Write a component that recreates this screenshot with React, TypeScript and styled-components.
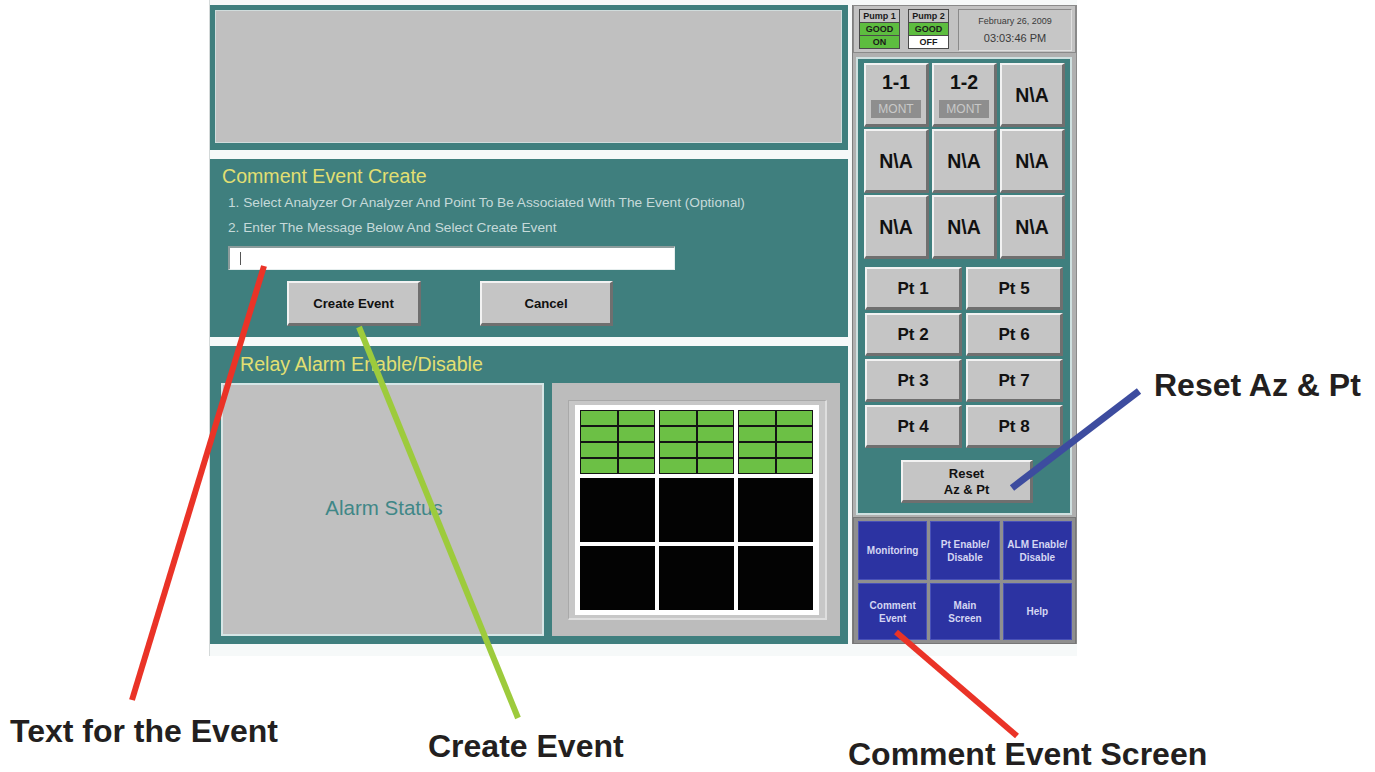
import React from "react";
import styled, { createGlobalStyle } from "styled-components";

const Global = createGlobalStyle`
  html, body { margin: 0; padding: 0; background: #ffffff; }
  body { font-family: "Liberation Sans", Arial, sans-serif; }
  * { box-sizing: border-box; }
`;

const TEAL = "#3f7f7e";
const GRAY = "#c0c0c0";
const YELLOW = "#e2df72";

const Page = styled.div`
  position: relative;
  width: 1375px;
  height: 772px;
  overflow: hidden;
  background: #fff;
`;

const Screen = styled.div`
  margin-left: 209px;
  width: 868px;
  height: 656px;
  border-left: 1px solid #d4d9d9;
  background: #f6f9f9;
  padding-top: 5px;
  display: flex;
  gap: 4px;
  align-items: flex-start;
`;

const LeftCol = styled.div`
  width: 638px;
  display: flex;
  flex-direction: column;
  gap: 9px;
`;

const Panel = styled.div<{ $h: number }>`
  height: ${(p) => p.$h}px;
  background: ${TEAL};
  display: flex;
  flex-direction: column;
`;

const TopPanel = styled(Panel)`
  padding: 5px 6px 7px 5px;
`;

const GrayBox = styled.div`
  flex: 1;
  background: ${GRAY};
  border: 1px solid #d0dcdc;
`;

const CommentPanel = styled(Panel)`
  padding: 6px 12px 0 12px;
`;

const Title = styled.div<{ $indent?: number }>`
  color: ${YELLOW};
  font-size: 19.6px;
  line-height: 22px;
  margin-left: ${(p) => p.$indent || 0}px;
`;

const Instructions = styled.div`
  margin-top: 3px;
`;

const Instruction = styled.div`
  color: #c6dada;
  font-size: 13.7px;
  line-height: 25px;
  margin-left: 6px;
`;

const TextInput = styled.div`
  width: 447px;
  height: 24px;
  margin: 6px 0 0 6px;
  background: #fff;
  border-top: 2px solid #8c9c9c;
  border-left: 2px solid #8c9c9c;
  border-right: 1px solid #e6eeee;
  border-bottom: 1px solid #e6eeee;
  display: flex;
  align-items: center;
  padding-left: 10px;
`;

const Caret = styled.span`
  width: 1px;
  height: 13px;
  background: #555;
`;

const ButtonRow = styled.div`
  display: flex;
  gap: 59px;
  margin: 11px 0 0 65px;
`;

const BevelButton = styled.div<{ $w: number; $h: number; $fs?: number }>`
  width: ${(p) => p.$w}px;
  height: ${(p) => p.$h}px;
  background: #c5c5c5;
  border-top: 2px solid #f2f2f2;
  border-left: 2px solid #f2f2f2;
  border-right: 3px solid #6f6f6f;
  border-bottom: 3px solid #6f6f6f;
  padding-top: 2px;
  display: flex;
  flex-direction: column;
  align-items: center;
  justify-content: center;
  font-weight: bold;
  font-size: ${(p) => p.$fs || 13.2}px;
  color: #111;
  text-align: center;
  line-height: 1.2;
`;

const RelayPanel = styled(Panel)`
  padding-top: 7px;
`;

const RelayRow = styled.div`
  display: flex;
  gap: 8px;
  margin: 8px 0 0 11px;
  height: 253px;
`;

const AlarmStatusBox = styled.div`
  width: 323px;
  background: ${GRAY};
  border: 2px solid #d6e6e6;
  display: flex;
  align-items: center;
  justify-content: center;
  color: #3f8787;
  font-size: 20.5px;
  padding: 0 0 3px 3px;
`;

const RelayBox = styled.div`
  width: 288px;
  background: #bcbcbc;
  padding: 17px 13px 16px 16px;
`;

const RelayFrame = styled.div`
  height: 100%;
  background: #c7c7c7;
  border-top: 1px solid #a9a9a9;
  border-left: 1px solid #a9a9a9;
  border-right: 2px solid #dedede;
  border-bottom: 2px solid #dedede;
  padding: 4px 6px 4px 6px;
`;

const RelayGrid = styled.div`
  background: #fff;
  padding: 5px;
  display: grid;
  grid-template-columns: repeat(3, 75px);
  grid-template-rows: repeat(3, 64px);
  gap: 4px;
`;

const GreenGroup = styled.div`
  background: #141414;
  padding: 1px;
  display: grid;
  grid-template-columns: 1fr 1fr;
  grid-template-rows: repeat(4, 1fr);
  gap: 2px;
`;

const GreenCell = styled.div`
  background: #6cc045;
`;

const BlackCell = styled.div`
  background: #030303;
`;

const RightCol = styled.div`
  width: 225px;
  height: 639px;
  background: #b0b0b0;
  border-left: 1px solid #7e7e7e;
  border-right: 1px solid #8a8a8a;
  display: flex;
  flex-direction: column;
`;

const StatusBar = styled.div`
  height: 48px;
  background: #c2c2c2;
  border: 1px solid #8a8a8a;
  padding: 3px 3px 2px 5px;
  display: flex;
  gap: 8px;
`;

const PumpBlock = styled.div`
  width: 41px;
  height: 40px;
  border: 1px solid #4a4a4a;
  display: grid;
  grid-template-rows: repeat(3, 1fr);
  background: #4a4a4a;
  gap: 1px;
`;

const PumpCell = styled.div<{ $bg: string }>`
  background: ${(p) => p.$bg};
  font-size: 9px;
  font-weight: bold;
  color: #1a1a1a;
  display: flex;
  align-items: center;
  justify-content: center;
  line-height: 1;
`;

const DateBox = styled.div`
  margin-left: 1px;
  flex: 1;
  height: 42px;
  background: #c6c6c6;
  border-top: 1px solid #8a8a8a;
  border-left: 1px solid #8a8a8a;
  border-right: 1px solid #e0e0e0;
  border-bottom: 1px solid #e0e0e0;
  display: flex;
  flex-direction: column;
  align-items: center;
  justify-content: center;
  gap: 7px;
  color: #3a3a3a;
`;

const DateText = styled.div<{ $fs: number }>`
  font-size: ${(p) => p.$fs}px;
  line-height: 1;
`;

const AnalyzerPanel = styled.div`
  margin: 4px 4px 0 3px;
  height: 458px;
  background: ${TEAL};
  border: 2px solid #cfe0e0;
  padding: 4px 5px 0 6px;
  display: flex;
  flex-direction: column;
`;

const AnalyzerGrid = styled.div`
  display: grid;
  grid-template-columns: repeat(3, 65px);
  grid-template-rows: repeat(3, 64px);
  gap: 2px 3px;
`;

const AzLabel = styled.div`
  font-size: 19.5px;
  font-weight: bold;
  line-height: 1;
`;

const MontTag = styled.div`
  margin-top: 8px;
  width: 50px;
  height: 18px;
  background: #8e8e8e;
  color: #c9c9c9;
  font-size: 12px;
  font-weight: normal;
  display: flex;
  align-items: center;
  justify-content: center;
`;

const PointGrid = styled.div`
  margin: 8px 0 0 1px;
  display: grid;
  grid-template-columns: repeat(2, 97px);
  grid-template-rows: repeat(4, 43px);
  gap: 3px 4px;
`;

const ResetWrap = styled.div`
  margin-top: 12px;
  display: flex;
  justify-content: center;
  padding-left: 5px;
`;

const NavGrid = styled.div`
  margin-top: 2px;
  height: 127px;
  background: #8f8f8f;
  border: 1px solid #777;
  padding: 3px 3px 3px 4px;
  display: grid;
  grid-template-columns: repeat(3, 1fr);
  grid-template-rows: 59px 1fr;
  gap: 3px;
`;

const NavCell = styled.div`
  background: #2c33a2;
  border: 1px solid #4a52b8;
  color: #d4d6f2;
  font-size: 10px;
  font-weight: bold;
  display: flex;
  align-items: center;
  justify-content: center;
  text-align: center;
  line-height: 1.3;
`;

const Overlay = styled.svg`
  position: absolute;
  left: 0;
  top: 0;
  pointer-events: none;
`;

const Callout = styled.div<{ $x: number; $y: number }>`
  position: absolute;
  left: ${(p) => p.$x}px;
  top: ${(p) => p.$y}px;
  font-family: "Liberation Sans", Arial, sans-serif;
  font-weight: bold;
  font-size: 32px;
  line-height: 30px;
  color: #231f20;
  white-space: nowrap;
`;

const analyzers: { label: string; mont?: boolean }[] = [
  { label: "1-1", mont: true },
  { label: "1-2", mont: true },
  { label: "N\\A" },
  { label: "N\\A" },
  { label: "N\\A" },
  { label: "N\\A" },
  { label: "N\\A" },
  { label: "N\\A" },
  { label: "N\\A" },
];

const points = ["Pt 1", "Pt 5", "Pt 2", "Pt 6", "Pt 3", "Pt 7", "Pt 4", "Pt 8"];

const navItems: [string, string?][] = [
  ["Monitoring"],
  ["Pt Enable/", "Disable"],
  ["ALM Enable/", "Disable"],
  ["Comment", "Event"],
  ["Main", "Screen"],
  ["Help"],
];

export default function App() {
  return (
    <Page>
      <Global />
      <Screen>
        <LeftCol>
          <TopPanel $h={145}>
            <GrayBox />
          </TopPanel>
          <CommentPanel $h={178}>
            <Title>Comment Event Create</Title>
            <Instructions>
              <Instruction>
                1. Select Analyzer Or Analyzer And Point To Be Associated With The Event (Optional)
              </Instruction>
              <Instruction>2. Enter The Message Below And Select Create Event</Instruction>
            </Instructions>
            <TextInput>
              <Caret />
            </TextInput>
            <ButtonRow>
              <BevelButton $w={134} $h={45}>Create Event</BevelButton>
              <BevelButton $w={133} $h={45}>Cancel</BevelButton>
            </ButtonRow>
          </CommentPanel>
          <RelayPanel $h={298}>
            <Title $indent={30}>Relay Alarm Enable/Disable</Title>
            <RelayRow>
              <AlarmStatusBox>Alarm Status</AlarmStatusBox>
              <RelayBox>
                <RelayFrame>
                  <RelayGrid>
                    {[0, 1, 2].map((g) => (
                      <GreenGroup key={g}>
                        {Array.from({ length: 8 }).map((_, i) => (
                          <GreenCell key={i} />
                        ))}
                      </GreenGroup>
                    ))}
                    {Array.from({ length: 6 }).map((_, i) => (
                      <BlackCell key={i} />
                    ))}
                  </RelayGrid>
                </RelayFrame>
              </RelayBox>
            </RelayRow>
          </RelayPanel>
        </LeftCol>
        <RightCol>
          <StatusBar>
            <PumpBlock>
              <PumpCell $bg="#c4c4c4">Pump 1</PumpCell>
              <PumpCell $bg="#5dbd3f">GOOD</PumpCell>
              <PumpCell $bg="#5dbd3f">ON</PumpCell>
            </PumpBlock>
            <PumpBlock>
              <PumpCell $bg="#c4c4c4">Pump 2</PumpCell>
              <PumpCell $bg="#5dbd3f">GOOD</PumpCell>
              <PumpCell $bg="#ffffff">OFF</PumpCell>
            </PumpBlock>
            <DateBox>
              <DateText $fs={9}>February 26, 2009</DateText>
              <DateText $fs={11}>03:03:46 PM</DateText>
            </DateBox>
          </StatusBar>
          <AnalyzerPanel>
            <AnalyzerGrid>
              {analyzers.map((a, i) => (
                <BevelButton key={i} $w={65} $h={64}>
                  <AzLabel>{a.label}</AzLabel>
                  {a.mont && <MontTag>MONT</MontTag>}
                </BevelButton>
              ))}
            </AnalyzerGrid>
            <PointGrid>
              {points.map((p) => (
                <BevelButton key={p} $w={97} $h={43} $fs={17}>
                  {p}
                </BevelButton>
              ))}
            </PointGrid>
            <ResetWrap>
              <BevelButton $w={132} $h={43} $fs={13}>
                <div>Reset</div>
                <div>Az &amp; Pt</div>
              </BevelButton>
            </ResetWrap>
          </AnalyzerPanel>
          <NavGrid>
            {navItems.map(([a, b]) => (
              <NavCell key={a}>
                <div>
                  {a}
                  {b && <br />}
                  {b}
                </div>
              </NavCell>
            ))}
          </NavGrid>
        </RightCol>
      </Screen>

      <Overlay width={1375} height={772} viewBox="0 0 1375 772">
        <line x1={264} y1={266} x2={132} y2={700} stroke="#ea3327" strokeWidth={6} />
        <line x1={359} y1={327} x2={518} y2={718} stroke="#9dcb3c" strokeWidth={6} />
        <line x1={1139} y1={391} x2={1012} y2={488} stroke="#3d4c9f" strokeWidth={7} />
        <line x1={896} y1={632} x2={1017} y2={736} stroke="#ea3327" strokeWidth={6} />
      </Overlay>

      <Callout $x={10} $y={716}>Text for the Event</Callout>
      <Callout $x={428} $y={731}>Create Event</Callout>
      <Callout $x={1154} $y={370}>Reset Az &amp; Pt</Callout>
      <Callout $x={848} $y={739}>Comment Event Screen</Callout>
    </Page>
  );
}
